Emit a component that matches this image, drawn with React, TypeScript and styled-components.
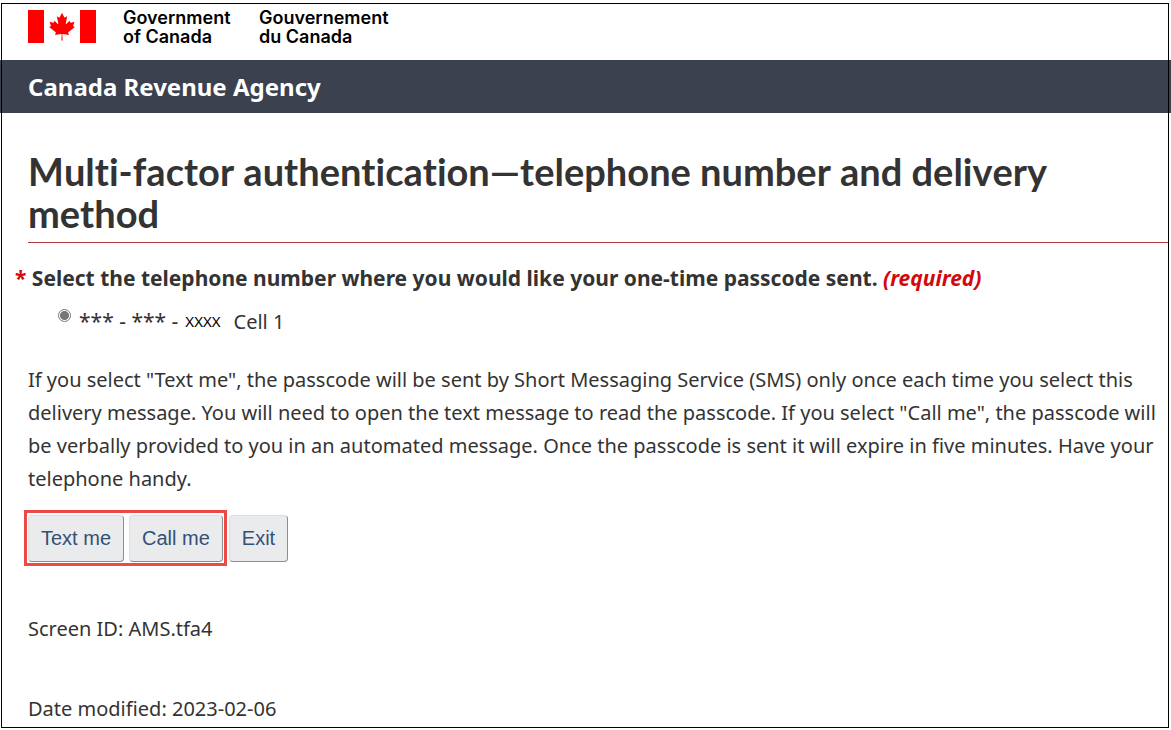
import React from 'react';
import styled, { createGlobalStyle } from 'styled-components';

const GlobalStyle = createGlobalStyle`
  * { box-sizing: border-box; }
  body {
    margin: 0;
    background: #fff;
    color: #333;
    font-family: "Noto Sans", "Open Sans", sans-serif;
    font-size: 20px;
    line-height: 33px;
  }
`;

const Page = styled.div`
  position: relative;
  padding: 10px 0 3px;

  &::after {
    content: "";
    position: absolute;
    inset: 3px 2px 0 1px;
    border: 1px solid #000;
    pointer-events: none;
  }
`;

const Header = styled.header`
  display: flex;
  align-items: flex-start;
  height: 50px;
  padding: 0 28px;
`;

const Flag = styled.svg`
  width: 68px;
  height: 33px;
  margin-right: 27px;
  fill: #f00;
`;

const Wordmark = styled.div`
  width: 136px;
  margin-top: -2px;
  color: #000;
  font: 600 18px/19px Inter, "Liberation Sans", Arial, sans-serif;
  white-space: nowrap;
`;

const Banner = styled.div`
  padding: 10px 28px;
  background: #3b414e;
  color: #fff;
  font-size: 24px;
  font-weight: 700;
`;

const Main = styled.main`
  padding: 37px 3px 0 28px;
`;

const Title = styled.h1`
  margin: 0 0 19px;
  padding-bottom: 8px;
  border-bottom: 1px solid #af3c43;
  font: bold 38px/42px Lato, sans-serif;
  font-variant-ligatures: none;
  font-kerning: none;
`;

const Fieldset = styled.fieldset`
  margin: 0 0 25px;
  padding: 0;
  border: 0;
`;

const Legend = styled.legend`
  margin: 0 0 10px -13px;
  padding: 0;
  font-size: 21px;
  font-weight: 700;
`;

const Star = styled.span`
  color: #d3080c;
`;

const Required = styled.em`
  color: #d3080c;
`;

const Choice = styled.label`
  display: flex;
  align-items: center;
  gap: 7px;
  padding-left: 30px;
`;

const Radio = styled.input`
  appearance: none;
  align-self: flex-start;
  width: 13px;
  height: 13px;
  margin: 4px 1px 0 0;
  border: 1px solid #767676;
  border-radius: 50%;
  background: radial-gradient(circle, #767676 0 4px, #fff 5px);
`;

const Prefix = styled.span`
  font-size: 21px;
`;

const Masked = styled.span`
  margin-right: 6px;
  color: #000;
  font-size: 15px;
`;

const Text = styled.p`
  margin: 0 0 15px;
`;

const Actions = styled.div`
  display: flex;
  align-items: center;
  margin: 0 0 46px -4px;
`;

const Highlight = styled.div`
  display: flex;
  gap: 5px;
  padding: 2px 1px 1px;
  border: 3px solid #eb4a46;
`;

const Button = styled.button`
  height: 47px;
  padding: 0 12px;
  border: 1px solid;
  border-color: #dcdee1 #8c8d8f #8c8d8f #dcdee1;
  border-radius: 4px;
  background: #eaebed;
  color: #335075;
  font: 20px/33px "Liberation Sans", Arial, sans-serif;
`;

const ExitButton = styled(Button)`
  margin-left: 2px;
`;

const Info = styled.p`
  margin: 0 0 47px;

  &:last-child { margin-bottom: 0; }
`;

const leaf =
  'M4890 4430l-45-863a95 95 0 0 1 111-98l859 151-116-320a65 65 0 0 1 20-73l941-762-212-99a65 65 0 0 1-34-79l186-572-542 115a65 65 0 0 1-73-38l-105-247-423 454a65 65 0 0 1-111-57l204-1052-327 189a65 65 0 0 1-91-27l-332-652-332 652a65 65 0 0 1-91 27l-327-189 204 1052a65 65 0 0 1-111 57l-423-454-105 247a65 65 0 0 1-73 38l-542-115 186 572a65 65 0 0 1-34 79l-212 99 941 762a65 65 0 0 1 20 73l-116 320 859-151a95 95 0 0 1 111 98l-45 863z';

export default function App() {
  return (
    <>
      <GlobalStyle />
      <Page>
        <Header>
          <Flag viewBox="0 0 68 33" aria-label="Flag of Canada" role="img">
            <path d="M0 0h16v33H0zM52 0h16v33H52z" />
            <path d={leaf} transform="translate(0.9 0) scale(0.0069)" />
          </Flag>
          <Wordmark>
            Government
            <br />
            of Canada
          </Wordmark>
          <Wordmark lang="fr">
            Gouvernement
            <br />
            du Canada
          </Wordmark>
        </Header>
        <Banner>Canada Revenue Agency</Banner>
        <Main>
          <Title>Multi-factor authentication—telephone number and delivery method</Title>
          <Fieldset>
            <Legend>
              <Star>*</Star> Select the telephone number where you would like your one-time passcode
              sent. <Required>(required)</Required>
            </Legend>
            <Choice>
              <Radio type="radio" name="phone" defaultChecked />
              <Prefix>*** - *** -</Prefix>
              <Masked>XXXX</Masked>
              <span>Cell 1</span>
            </Choice>
          </Fieldset>
          <Text>
            If you select "Text me", the passcode will be sent by Short Messaging Service (SMS) only
            once each time you select this delivery message. You will need to open the text message
            to read the passcode. If you select "Call me", the passcode will be verbally provided to
            you in an automated message. Once the passcode is sent it will expire in five minutes.
            Have your telephone handy.
          </Text>
          <Actions>
            <Highlight>
              <Button type="button">Text me</Button>
              <Button type="button">Call me</Button>
            </Highlight>
            <ExitButton type="button">Exit</ExitButton>
          </Actions>
          <Info>Screen ID: AMS.tfa4</Info>
          <Info>Date modified: 2023-02-06</Info>
        </Main>
      </Page>
    </>
  );
}
